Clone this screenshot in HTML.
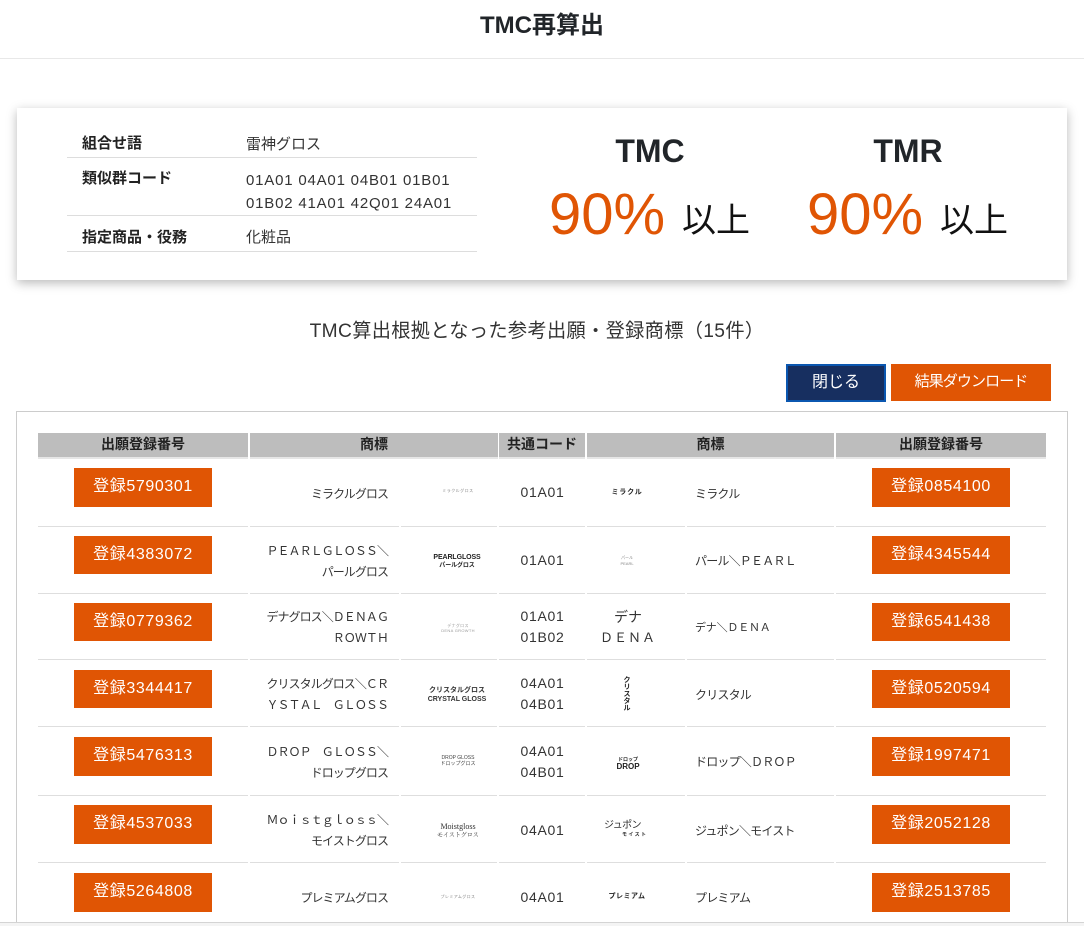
<!DOCTYPE html>
<html lang="ja"><head><meta charset="utf-8"><title>TMC再算出</title>
<style>
html,body{margin:0;padding:0;background:#fff;width:1084px;height:926px;overflow:hidden}
body{position:relative;font-family:"Liberation Sans","Noto Sans CJK JP",sans-serif;color:#212529}
div,span.a{position:absolute;white-space:nowrap}
.ln{height:1px;background:#ddd}
.hd{top:433px;height:24px;line-height:23px;background:#bdbdbd;border-bottom:2px solid #e6e6e6;text-align:center;font-weight:bold;font-size:14px;color:#222}
.b{width:138px;background:#e05504;color:#fff;font-size:16px;text-align:center;letter-spacing:.6px;box-sizing:border-box;padding-top:1px}
.b1{left:74px}.b2{left:872px}
.n{font-size:12px;line-height:21px;letter-spacing:-.8px;color:#333}
.nl{left:249px;width:139px;text-align:right;letter-spacing:-.95px}
.nr{left:695px}
.c{left:500px;width:85px;text-align:center;font-size:14px;line-height:21px;letter-spacing:.7px;color:#333}
.lg{text-align:center;color:#222;line-height:1.15}
.l1{left:401px;width:114px}
.l2{left:570px;width:114px}
.k{left:82px;font-weight:bold;font-size:15px;line-height:20px;color:#222}
.v{left:246px;font-size:15px;line-height:21px;color:#333}
.big{font-size:32px;font-weight:bold;line-height:36px;color:#212529;text-align:center;width:120px}
.pct{font-size:58px;line-height:60px;color:#e05504}
.ij{font-size:34px;line-height:40px;color:#111}
</style></head><body>

<div style="left:0;top:10px;width:1084px;text-align:center;font-size:24px;font-weight:bold;line-height:32px;color:#212529">TMC再算出</div>
<div style="left:0;top:58px;width:1084px;height:1px;background:#e8e8e8"></div>

<div style="left:17px;top:108px;width:1050px;height:172px;background:#fff;box-shadow:0 3px 10px rgba(0,0,0,.28)"></div>
<div class="k" style="top:134px">組合せ語</div>
<div class="v" style="top:134px">雷神グロス</div>
<div class="ln" style="left:67px;top:157px;width:410px"></div>
<div class="k" style="top:169px">類似群コード</div>
<div class="v" style="top:170px;letter-spacing:.8px">01A01 04A01 04B01 01B01<br><span style="display:inline-block;margin-top:2px">01B02 41A01 42Q01 24A01</span></div>
<div class="ln" style="left:67px;top:215px;width:410px"></div>
<div class="k" style="top:228px">指定商品・役務</div>
<div class="v" style="top:227px">化粧品</div>
<div class="ln" style="left:67px;top:251px;width:410px"></div>

<div class="big" style="left:590px;top:133px">TMC</div>
<div class="big" style="left:848px;top:133px">TMR</div>
<div class="pct" style="left:549px;top:185px">90%</div>
<div class="ij" style="left:682px;top:201px">以上</div>
<div class="pct" style="left:807px;top:185px">90%</div>
<div class="ij" style="left:940px;top:201px">以上</div>

<div style="left:0;top:318px;width:1074px;text-align:center;font-size:19.2px;line-height:28px;letter-spacing:.35px;color:#333">TMC算出根拠となった参考出願・登録商標（15件）</div>

<div style="left:786px;top:364px;width:96px;height:34px;border:2px solid #0b57b0;background:#172f60;color:#fff;font-size:16px;line-height:34px;text-align:center">閉じる</div>
<div style="left:891px;top:364px;width:160px;height:37px;background:#e05504;color:#fff;font-size:15px;letter-spacing:-.9px;line-height:36px;text-align:center">結果ダウンロード</div>

<div style="left:16px;top:411px;height:515px;border:1px solid #ccc;border-bottom:0;box-sizing:border-box;width:1052px"></div>

<div class="hd" style="left:38px;width:210px">出願登録番号</div>
<div class="hd" style="left:250px;width:248px">商標</div>
<div class="hd" style="left:499px;width:86px">共通コード</div>
<div class="hd" style="left:587px;width:247px">商標</div>
<div class="hd" style="left:836px;width:210px">出願登録番号</div>

<svg style="position:absolute;left:0;top:0" width="1084" height="926">
<g fill="#dedede">
<rect x="38" y="526" width="1008" height="1"/><rect x="38" y="593" width="1008" height="1"/><rect x="38" y="659" width="1008" height="1"/><rect x="38" y="726" width="1008" height="1"/><rect x="38" y="795" width="1008" height="1"/><rect x="38" y="862" width="1008" height="1"/>
</g>
<g fill="#fff">
<rect x="248" y="520" width="2" height="350"/><rect x="399" y="520" width="2" height="350"/><rect x="497" y="520" width="2" height="350"/><rect x="585" y="520" width="2" height="350"/><rect x="685" y="520" width="2" height="350"/><rect x="834" y="520" width="2" height="350"/>
</g>
</svg>

<div class="b b1" style="top:468px;height:39px;line-height:36px">登録5790301</div>
<div class="b b1" style="top:536px;height:38px;line-height:36px">登録4383072</div>
<div class="b b1" style="top:603px;height:38px;line-height:36px">登録0779362</div>
<div class="b b1" style="top:670px;height:38px;line-height:36px">登録3344417</div>
<div class="b b1" style="top:737px;height:39px;line-height:36px">登録5476313</div>
<div class="b b1" style="top:805px;height:39px;line-height:36px">登録4537033</div>
<div class="b b1" style="top:873px;height:39px;line-height:36px">登録5264808</div>

<div class="b b2" style="top:468px;height:39px;line-height:36px">登録0854100</div>
<div class="b b2" style="top:536px;height:38px;line-height:36px">登録4345544</div>
<div class="b b2" style="top:603px;height:38px;line-height:36px">登録6541438</div>
<div class="b b2" style="top:670px;height:38px;line-height:36px">登録0520594</div>
<div class="b b2" style="top:737px;height:39px;line-height:36px">登録1997471</div>
<div class="b b2" style="top:805px;height:39px;line-height:36px">登録2052128</div>
<div class="b b2" style="top:873px;height:39px;line-height:36px">登録2513785</div>

<div class="n nl" style="top:484px">ミラクルグロス</div>
<div class="n nl" style="top:541px">ＰＥＡＲＬＧＬＯＳＳ＼<br>パールグロス</div>
<div class="n nl" style="top:607px">デナグロス＼ＤＥＮＡＧ<br>ＲＯＷＴＨ</div>
<div class="n nl" style="top:674px">クリスタルグロス＼ＣＲ<br>ＹＳＴＡＬ　ＧＬＯＳＳ</div>
<div class="n nl" style="top:742px">ＤＲＯＰ　ＧＬＯＳＳ＼<br>ドロップグロス</div>
<div class="n nl" style="top:810px">Ｍｏｉｓｔｇｌｏｓｓ＼<br>モイストグロス</div>
<div class="n nl" style="top:888px">プレミアムグロス</div>

<div class="c" style="top:482px">01A01</div>
<div class="c" style="top:550px">01A01</div>
<div class="c" style="top:606px">01A01<br>01B02</div>
<div class="c" style="top:673px">04A01<br>04B01</div>
<div class="c" style="top:741px">04A01<br>04B01</div>
<div class="c" style="top:820px">04A01</div>
<div class="c" style="top:887px">04A01</div>

<div class="n nr" style="top:484px">ミラクル</div>
<div class="n nr" style="top:551px">パール＼ＰＥＡＲＬ</div>
<div class="n nr" style="top:618px;font-size:11px;letter-spacing:-.2px">デナ＼ＤＥＮＡ</div>
<div class="n nr" style="top:685px">クリスタル</div>
<div class="n nr" style="top:752px">ドロップ＼ＤＲＯＰ</div>
<div class="n nr" style="top:821px">ジュポン＼モイスト</div>
<div class="n nr" style="top:888px">プレミアム</div>

<div class="lg l1" style="top:489px;font-size:4px;letter-spacing:.5px;color:#888">ミラクルグロス</div>
<div class="lg l1" style="top:554px;font-size:7px;font-weight:bold;letter-spacing:-.1px;left:400px">PEARLGLOSS<br><span style="font-size:6px">パールグロス</span></div>
<div class="lg l1" style="top:624px;font-size:4px;letter-spacing:.3px;color:#999">デナグロス<br>DENA GROWTH</div>
<div class="lg l1" style="top:686px;font-size:7px;font-weight:bold;line-height:9px;color:#333;left:400px">クリスタルグロス<br>CRYSTAL GLOSS</div>
<div class="lg l1" style="top:755px;font-size:5px;line-height:6px;color:#444">DROP GLOSS<br>ドロップグロス</div>
<div class="lg l1" style="top:823px;font-size:8px;line-height:8px;font-family:'Liberation Serif','Noto Serif CJK SC',serif;color:#333">Moistgloss<br><span style="font-size:6px">モイストグロス</span></div>
<div class="lg l1" style="top:895px;font-size:4px;letter-spacing:.4px;color:#888">プレミアムグロス</div>

<div class="lg l2" style="top:489px;font-size:7px;font-weight:bold;letter-spacing:.8px;left:570px">ミラクル</div>
<div class="lg l2" style="top:555px;font-size:4px;line-height:6px;color:#888">パール<br>PEARL</div>
<div class="lg l2" style="top:607px;font-size:13px;line-height:20px;color:#333;letter-spacing:1px;left:571px"><span style="font-size:14px;letter-spacing:0">デナ</span><br>ＤＥＮＡ</div>
<div class="lg" style="left:623px;top:677px;width:8px;font-size:7px;line-height:7px;font-weight:bold;white-space:normal">ク<br>リ<br>ス<br>タ<br>ル</div>
<div class="lg l2" style="top:758px;font-size:5px;line-height:5px;font-weight:bold;left:571px">ドロップ<br><span style="font-size:8px;line-height:7px">DROP</span></div>
<div class="lg" style="left:604px;top:820px;font-size:10px;line-height:12px;color:#333;letter-spacing:-.6px">ジュポン</div>
<div class="lg" style="left:622px;top:831px;font-size:5px;line-height:8px;font-weight:bold;letter-spacing:1.4px;color:#333">モイスト</div>
<div class="lg l2" style="top:893px;font-size:7px;font-weight:bold;letter-spacing:.5px;left:570px">プレミアム</div>

<div style="left:0;top:922px;width:1084px;height:1px;background:#d4d4d4"></div>
<div style="left:0;top:923px;width:1084px;height:3px;background:#f4f4f4"></div>
</body></html>
